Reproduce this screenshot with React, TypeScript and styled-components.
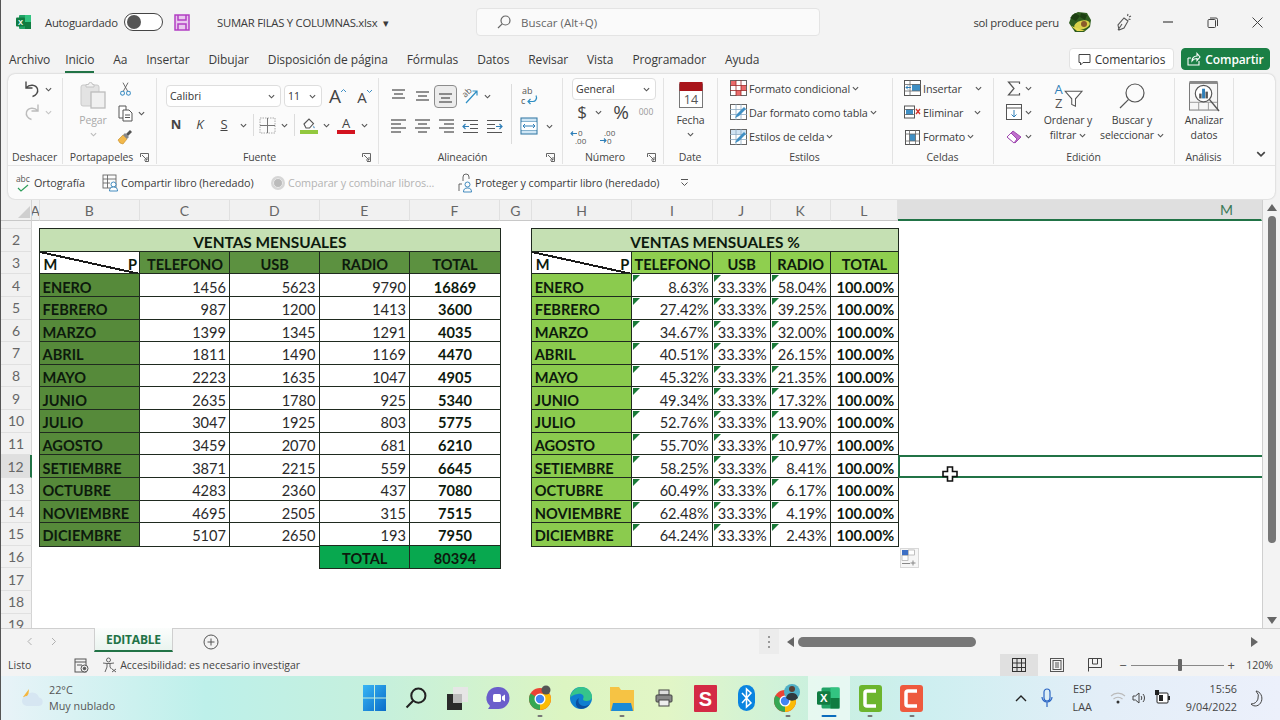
import React from "react";
import styled, { createGlobalStyle } from "styled-components";

const UI = `"Open Sans", "Noto Sans", sans-serif`;
const CELL = `Lato, "Liberation Sans", sans-serif`;

const Global = createGlobalStyle`
  html, body { margin: 0; padding: 0; width: 1280px; height: 720px; overflow: hidden; background: #f3f3f3; }
  * { box-sizing: border-box; }
  svg { overflow: visible; }
`;

const Page = styled.div`
  width: 1280px;
  height: 720px;
  display: flex;
  flex-direction: column;
  overflow: hidden;
  background: #f3f3f3;
  border-left: 1px solid #555;
  font-family: ${UI};
  color: #3a3a3a;
`;

/* title bar */
const TitleBar = styled.div`
  flex: 0 0 44px;
  display: grid;
  grid-template-columns: 44px 79px 50px 43px 259px 344px 1fr;
  align-items: center;
`;
const LogoBox = styled.div`
  padding-left: 15px;
  display: flex;
`;
const TitleText = styled.span`
  font-size: 11.3px;
  letter-spacing: -0.25px;
  white-space: nowrap;
`;
const Toggle = styled.div`
  width: 39px;
  height: 18px;
  border: 1px solid #444;
  border-radius: 9px;
  background: #fff;
  padding: 1px 2px;
`;
const Knob = styled.div`
  width: 14px;
  height: 14px;
  border-radius: 50%;
  background: #555;
`;
const SearchBox = styled.div`
  height: 28px;
  display: flex;
  align-items: center;
  gap: 10px;
  padding-left: 20px;
  background: #fafafa;
  border: 1px solid #e4e4e4;
  border-radius: 4px;
  font-size: 11.5px;
  color: #666;
`;
const TitleRight = styled.div`
  display: flex;
  align-items: center;
  justify-content: flex-end;
`;
const WinBtn = styled.div`
  width: 45px;
  display: flex;
  align-items: center;
  justify-content: center;
`;
const Spaced = styled.div<{ $l: number }>`
  display: flex;
  align-items: center;
  margin-left: ${(p) => p.$l}px;
`;

/* tab row */
const TabRow = styled.div`
  flex: 0 0 30px;
  display: flex;
  align-items: center;
  gap: 19px;
  padding: 0 10px 0 8px;
`;
const Tab = styled.div<{ $on?: boolean }>`
  position: relative;
  font-size: 12px;
  letter-spacing: -0.1px;
  white-space: nowrap;
  &:first-child {
    margin-right: -4px;
  }
  &::after {
    content: "";
    display: ${(p) => (p.$on ? "block" : "none")};
    position: absolute;
    left: 0;
    right: 0;
    bottom: -5px;
    height: 2px;
    background: #217346;
  }
`;
const ActionBtn = styled.div<{ $green?: boolean; $w: number }>`
  width: ${(p) => p.$w}px;
  height: 22px;
  display: flex;
  align-items: center;
  justify-content: center;
  gap: 4px;
  font-size: 12px;
  letter-spacing: -0.1px;
  font-weight: ${(p) => (p.$green ? 600 : 400)};
  border-radius: 4px;
  background: ${(p) => (p.$green ? "#1b7f45" : "#fff")};
  color: ${(p) => (p.$green ? "#fff" : "#333")};
  border: 1px solid ${(p) => (p.$green ? "#1b7f45" : "#e2e2e2")};
`;
const RightActions = styled.div`
  margin-left: auto;
  display: flex;
  gap: 7px;
`;

/* ribbon */
const RibbonCard = styled.div`
  flex: 0 0 125px;
  margin: 0 5px 0 7px;
  background: #fbfbfb;
  border-radius: 7px;
  box-shadow: 0 0 2px rgba(0, 0, 0, 0.25);
  display: flex;
  flex-direction: column;
`;
const RibbonRow = styled.div`
  height: 92px;
  flex: none;
  display: flex;
  border-bottom: 1px solid #e4e4e4;
`;
const Group = styled.div<{ $w: number }>`
  width: ${(p) => p.$w}px;
  flex: none;
  margin: 4px 0 1px;
  min-height: 0;
  display: flex;
  flex-direction: column;
  border-right: 1px solid #e3e3e3;
`;
const GroupBody = styled.div<{ $t?: number; $l?: number }>`
  flex: 1;
  display: flex;
  min-height: 0;
  padding: ${(p) => p.$t ?? 0}px 0 0 ${(p) => p.$l ?? 0}px;
`;
const GroupFoot = styled.div`
  flex: 0 0 14px;
  display: flex;
  align-items: center;
  padding: 1px 1px 0 0;
`;
const GroupLabel = styled.div`
  flex: 1;
  text-align: center;
  font-size: 10.5px;
  letter-spacing: -0.1px;
  color: #444;
  white-space: nowrap;
`;
const Launcher = styled.div`
  flex: 0 0 15px;
  display: flex;
`;
const Col = styled.div<{ $gap?: number; $w?: number; $center?: boolean; $mt?: number; $ml?: number }>`
  display: flex;
  flex-direction: column;
  gap: ${(p) => p.$gap ?? 0}px;
  margin: ${(p) => p.$mt ?? 0}px 0 0 ${(p) => p.$ml ?? 0}px;
  ${(p) => (p.$w ? `width: ${p.$w}px; flex: none;` : "")}
  ${(p) => (p.$center ? "align-items: center;" : "")}
`;
const Row = styled.div<{ $h?: number; $gap?: number }>`
  display: flex;
  align-items: center;
  height: ${(p) => p.$h ?? 24}px;
  gap: ${(p) => p.$gap ?? 0}px;
`;
const Slot = styled.div<{ $w: number; $sel?: boolean }>`
  width: ${(p) => p.$w}px;
  height: ${(p) => (p.$sel ? "23px" : "auto")};
  flex: none;
  display: flex;
  align-items: center;
  justify-content: center;
  ${(p) => (p.$sel ? "background:#ececec;border:1.5px solid #8c8c8c;border-radius:4px;" : "")}
`;
const VSep = styled.div<{ $h?: number }>`
  width: 1px;
  height: ${(p) => p.$h ?? 22}px;
  background: #dcdcdc;
`;
const Select = styled.div<{ $w: number; $l?: number }>`
  width: ${(p) => p.$w}px;
  height: 22px;
  margin-left: ${(p) => p.$l ?? 0}px;
  flex: none;
  display: flex;
  align-items: center;
  justify-content: space-between;
  padding: 0 5px 0 3px;
  background: #fff;
  border: 1px solid #dedede;
  border-radius: 4px;
  font-size: 10.5px;
  color: #333;
`;
const FontLetter = styled.span<{ $i?: boolean; $b?: boolean; $u?: boolean; $s?: number; $c?: string }>`
  font-family: ${UI};
  font-size: ${(p) => p.$s ?? 12}px;
  font-style: ${(p) => (p.$i ? "italic" : "normal")};
  font-weight: ${(p) => (p.$b ? 700 : 400)};
  text-decoration: ${(p) => (p.$u ? "underline" : "none")};
  color: ${(p) => p.$c ?? "#444"};
  line-height: 1.2;
`;
const SmallText = styled.div<{ $c?: string; $mt?: number }>`
  margin-top: ${(p) => p.$mt ?? 0}px;
  font-size: 10.5px;
  line-height: 15px;
  letter-spacing: -0.1px;
  color: ${(p) => p.$c ?? "#3c3c3c"};
  white-space: nowrap;
  display: flex;
  align-items: center;
  gap: 3px;
`;
const ChevLine = styled.div`
  margin-top: 3px;
  display: flex;
`;
const BigBtn = styled.div<{ $w: number }>`
  width: ${(p) => p.$w}px;
  flex: none;
  display: flex;
  flex-direction: column;
  align-items: center;
`;
const IconBox = styled.div<{ $h: number }>`
  height: ${(p) => p.$h}px;
  display: flex;
  align-items: center;
`;
const ListItem = styled.div`
  height: 24.7px;
  display: flex;
  align-items: center;
  gap: 2px;
  font-size: 10.8px;
  letter-spacing: -0.1px;
  color: #3c3c3c;
  white-space: nowrap;
`;
const CollapseBtn = styled.div`
  margin: 0 9px 6px auto;
  align-self: flex-end;
  display: flex;
`;

/* quick bar */
const QuickBar = styled.div`
  flex: 1;
  display: flex;
  align-items: center;
  padding-left: 8px;
  font-size: 10.8px;
  letter-spacing: -0.1px;
`;
const QuickItem = styled.div<{ $w: number; $off?: boolean }>`
  width: ${(p) => p.$w}px;
  flex: none;
  display: flex;
  align-items: center;
  gap: 2px;
  white-space: nowrap;
  color: ${(p) => (p.$off ? "#b4b4b4" : "#3c3c3c")};
`;

/* sheet */
const SheetArea = styled.div`
  flex: 1;
  min-height: 0;
  margin-top: 1px;
  display: flex;
`;
const Sheet = styled.div`
  width: 1261px;
  flex: none;
  height: 100%;
  overflow: hidden;
  background: #fff;
  display: grid;
  grid-template-columns: 31px 7.5px 100.5px 90px 89.5px 90.5px 90px 31.7px 100.6px 80.4px 58px 60px 67.6px 1fr;
  grid-template-rows: 21px 8px repeat(18, 22.64px);
  font-family: ${CELL};
`;
const Corner = styled.div`
  background: #f1f1f1;
  border-right: 1px solid #d4d4d4;
  border-bottom: 1px solid #c8c8c8;
  display: flex;
  align-items: flex-end;
  justify-content: flex-end;
  padding: 0 1px 2px 0;
`;
const ColHead = styled.div<{ $sel?: boolean }>`
  background: ${(p) => (p.$sel ? "#dfdfdf" : "#f1f1f1")};
  border-right: 1px solid ${(p) => (p.$sel ? "#dfdfdf" : "#e0e0e0")};
  border-bottom: ${(p) => (p.$sel ? "2px solid #217346" : "1px solid #c8c8c8")};
  color: ${(p) => (p.$sel ? "#3b7a57" : "#666")};
  font-size: 14px;
  overflow: hidden;
  display: flex;
  align-items: center;
  justify-content: ${(p) => (p.$sel ? "flex-end" : "center")};
  padding-right: ${(p) => (p.$sel ? "28px" : "0")};
`;
const RowHead = styled.div<{ $row: number; $sel?: boolean }>`
  grid-column: 1;
  grid-row: ${(p) => p.$row + 1};
  background: ${(p) => (p.$sel ? "#dfdfdf" : "#f1f1f1")};
  border-right: ${(p) => (p.$sel ? "2px solid #217346" : "1px solid #d4d4d4")};
  border-bottom: 1px solid #e0e0e0;
  color: #666;
  font-size: 14px;
  display: flex;
  align-items: center;
  justify-content: center;
  overflow: hidden;
`;
const DataTable = styled.div<{ $col: string; $row: string }>`
  grid-column: ${(p) => p.$col};
  grid-row: ${(p) => p.$row};
  display: grid;
  grid-template-columns: subgrid;
  grid-template-rows: subgrid;
  color: #111;
`;
const Cell = styled.div<{
  $bg?: string;
  $bold?: boolean;
  $align?: "left" | "right" | "center";
  $span?: number;
  $start?: number;
  $flag?: boolean;
  $size?: number;
}>`
  position: relative;
  grid-column: ${(p) => (p.$start ? `${p.$start} / span ${p.$span ?? 1}` : `span ${p.$span ?? 1}`)};
  background: ${(p) => p.$bg ?? "#fff"};
  outline: 1.2px solid #1f2a1f;
  outline-offset: -0.6px;
  font-size: ${(p) => p.$size ?? 14.6}px;
  font-weight: ${(p) => (p.$bold ? 700 : 400)};
  color: ${(p) => (p.$bold ? "#0d1a0d" : "#2a2a2a")};
  display: flex;
  align-items: center;
  justify-content: ${(p) =>
    p.$align === "left" ? "flex-start" : p.$align === "center" ? "center" : "flex-end"};
  padding: 3px 4px 0 ${(p) => (p.$align === "left" ? 3 : 4)}px;
  white-space: nowrap;
  overflow: hidden;
  ${(p) =>
    p.$flag
      ? `&::before{content:"";position:absolute;left:1px;top:1px;width:0;height:0;border-top:7px solid #1a7a38;border-right:7px solid transparent;}`
      : ""}
`;
const DiagCell = styled(Cell)`
  justify-content: space-between;
  padding: 3px 3px 0 4px;
  &::after {
    content: "";
    position: absolute;
    inset: 0;
    background: linear-gradient(
      to top right,
      transparent calc(50% - 1px),
      #1a1a1a calc(50% - 1px),
      #1a1a1a calc(50% + 1px),
      transparent calc(50% + 1px)
    );
  }
`;
const SelectedRow = styled.div`
  grid-column: 14;
  grid-row: 13;
  position: relative;
  border: solid #217346;
  border-width: 2px 0 2px 2px;
  margin-top: -0.5px;
`;
const PointerWrap = styled.div`
  position: absolute;
  left: 42px;
  top: 9px;
  display: flex;
`;
const FlashBtn = styled.div`
  grid-column: 14;
  grid-row: 17;
  width: 19px;
  height: 20px;
  margin: 2px 0 0 2px;
  background: #f6f6f6;
  border: 1px solid #d8d8d8;
  display: flex;
  align-items: center;
  justify-content: center;
`;
const VScroll = styled.div`
  flex: 1;
  background: #f3f3f3;
  border-left: 1px solid #cfcfcf;
  display: flex;
  flex-direction: column;
  align-items: center;
  padding: 3px 0 0;
`;
const VThumb = styled.div`
  width: 8px;
  height: 327px;
  margin: 3px 0 0;
  border-radius: 4px;
  background: #767676;
`;
const VDown = styled.div`
  margin-top: auto;
  padding-bottom: 2px;
  display: flex;
`;

/* sheet tabs */
const SheetTabs = styled.div`
  flex: 0 0 26px;
  display: flex;
  align-items: stretch;
  border-top: 1px solid #cfcfcf;
`;
const TabNav = styled.div`
  width: 93px;
  display: flex;
  align-items: center;
  gap: 18px;
  padding-left: 26px;
`;
const SheetTab = styled.div`
  width: 79px;
  height: 24px;
  margin-top: -1px;
  display: flex;
  align-items: center;
  justify-content: center;
  background: linear-gradient(#fbfdfc, #eaf4ef);
  border: 1px solid #cfcfcf;
  border-top: none;
  border-bottom: 2px solid #217346;
  color: #217346;
  font-size: 12px;
  font-weight: 700;
  letter-spacing: -0.2px;
`;
const AddBox = styled.div`
  margin-left: 30px;
  display: flex;
  align-items: center;
`;
const Dots = styled.div`
  margin-left: auto;
  width: 20px;
  background: #ececec;
  display: flex;
  align-items: center;
  justify-content: center;
`;
const HScroll = styled.div`
  width: 501px;
  display: flex;
  align-items: center;
  padding: 0 20px 0 6px;
  gap: 3px;
`;
const HThumb = styled.div`
  width: 179px;
  height: 10px;
  border-radius: 5px;
  background: #777;
`;

/* status bar */
const StatusBar = styled.div`
  flex: 0 0 22px;
  display: flex;
  align-items: center;
  font-size: 10.5px;
  color: #444;
  padding-left: 7px;
`;
const StatusIcon = styled.div<{ $l: number }>`
  margin-left: ${(p) => p.$l}px;
  display: flex;
  align-items: center;
  gap: 3px;
`;
const ViewBtn = styled.div<{ $on?: boolean }>`
  width: 38px;
  height: 22px;
  display: flex;
  align-items: center;
  justify-content: center;
  background: ${(p) => (p.$on ? "#e0e0e0" : "transparent")};
`;
const ViewGroup = styled.div`
  margin-left: auto;
  display: flex;
  align-items: center;
`;
const ZoomTrack = styled.div`
  position: relative;
  width: 93px;
  height: 1px;
  background: #888;
  margin: 0 4px;
`;
const ZoomThumb = styled.div`
  position: absolute;
  left: 47px;
  top: -6px;
  width: 4px;
  height: 12px;
  border-radius: 1px;
  background: #666;
`;
const ZoomPct = styled.div`
  width: 45px;
  padding-left: 4px;
  text-align: center;
`;
const ZoomSign = styled.span<{ $l?: number }>`
  margin-left: ${(p) => p.$l ?? 0}px;
  font-size: 13px;
  color: #555;
`;

/* taskbar */
const Taskbar = styled.div`
  flex: 0 0 44px;
  display: flex;
  align-items: center;
  background: linear-gradient(
    90deg,
    #e8f3f8 0%,
    #bdf0ea 16%,
    #c6f0dc 30%,
    #dcf5c2 44%,
    #e2f6c6 52%,
    #c9f0df 64%,
    #cdeff0 72%,
    #e3eef8 86%,
    #ecf0fb 100%
  );
`;
const Weather = styled.div`
  width: 353px;
  flex: none;
  display: flex;
  align-items: center;
  gap: 5px;
  padding-left: 19px;
`;
const WeatherText = styled.div`
  font-size: 10.8px;
  line-height: 16px;
  color: #555;
`;
const TaskIcons = styled.div`
  display: flex;
  align-items: center;
`;
const TaskSlot = styled.div<{ $on?: boolean; $run?: boolean }>`
  position: relative;
  width: 41.3px;
  height: 44px;
  display: flex;
  align-items: center;
  justify-content: center;
  background: ${(p) => (p.$on ? "rgba(255,255,255,.55)" : "transparent")};
  &::after {
    content: "";
    display: ${(p) => (p.$on || p.$run ? "block" : "none")};
    position: absolute;
    bottom: 3px;
    left: 50%;
    transform: translateX(-50%);
    width: ${(p) => (p.$on ? "15px" : "5px")};
    height: 2px;
    border-radius: 1px;
    background: ${(p) => (p.$on ? "#0a6cbd" : "#777")};
  }
`;
const Tray = styled.div`
  margin-left: auto;
  display: flex;
  align-items: center;
  padding-right: 16px;
`;
const TrayItem = styled.div<{ $l: number }>`
  margin-left: ${(p) => p.$l}px;
  display: flex;
  align-items: center;
`;
const TrayText = styled.div<{ $right?: boolean }>`
  font-size: 10.8px;
  line-height: 18px;
  color: #444;
  text-align: ${(p) => (p.$right ? "right" : "center")};
`;

/* icons */
const Chev = ({ c = "#555", s = 7 }: { c?: string; s?: number }) => (
  <svg width={s} height={s} viewBox="0 0 8 8" fill="none" stroke={c} strokeWidth="1.3">
    <path d="M1 2.5l3 3 3-3" />
  </svg>
);
const Launch = () => (
  <svg width="9" height="9" viewBox="0 0 9 9" fill="none" stroke="#666" strokeWidth="1">
    <path d="M.5 4V.5h8v8H5M2 2l5 5M4 7h3V4" />
  </svg>
);
const Bars = ({ rows, c = "#555" }: { rows: number[][]; c?: string }) => (
  <svg width="17" height="16" viewBox="0 0 17 16" stroke={c} strokeWidth="1.3" fill="none">
    {rows.map((r, i) => (
      <path key={i} d={`M${r[0]} ${r[2]}H${r[1]}`} />
    ))}
  </svg>
);
const ExcelLogo = ({ s = 16 }: { s?: number }) => (
  <svg width={s} height={s} viewBox="0 0 16 16">
    <rect x="3" y="1" width="12" height="14" rx="1" fill="#21a366" />
    <rect x="9" y="1" width="6" height="7" fill="#33c481" />
    <rect x="9" y="8" width="6" height="7" fill="#107c41" />
    <rect x="0" y="3.5" width="9" height="9" rx="1" fill="#107c41" />
    <text x="4.5" y="10.8" fontSize="7.5" fontWeight="700" fill="#fff" textAnchor="middle" fontFamily="Liberation Sans">X</text>
  </svg>
);
const Save = () => (
  <svg width="16" height="17" viewBox="0 0 16 17" fill="#e9c9ee" stroke="#b23fc4" strokeWidth="1.5">
    <rect x="1" y="1" width="14" height="15" />
    <path d="M4 1v5h8V1M4 16v-6h8v6" fill="none" />
  </svg>
);
const Magnifier = ({ s = 14, c = "#666", w = 1.2 }: { s?: number; c?: string; w?: number }) => (
  <svg width={s} height={s} viewBox="0 0 14 14" fill="none" stroke={c} strokeWidth={w}>
    <circle cx="8.5" cy="5.5" r="4.5" />
    <path d="M5.2 8.8L1 13" />
  </svg>
);
const Avatar = () => (
  <svg width="24" height="22" viewBox="0 0 24 22">
    <path d="M1 12L4 4l6-3 9 1 4 7-1 7-6 5-9 0z" fill="#2f5d1f" />
    <path d="M2 7l5-5 5 3-4 5zM13 2l6 2-2 5-5-3z" fill="#1d3f12" />
    <ellipse cx="14" cy="14" rx="8" ry="4.5" fill="#d8d24a" transform="rotate(-15 14 14)" />
    <circle cx="16" cy="13" r="3" fill="#8a5a2b" />
    <path d="M3 15l6 5 8 0-8-3z" fill="#e6da4e" />
  </svg>
);
const Pen = () => (
  <svg width="16" height="18" viewBox="0 0 16 18" fill="none" stroke="#555" strokeWidth="1.1">
    <path d="M3 17l-1-5 6-7 4 3-4 7z M6 11l-4 6M12 1l-.5 2M15 3l-2 1M14.5 6.5l-2-.4" />
  </svg>
);
const Comment = ({ c = "#444" }: { c?: string }) => (
  <svg width="13" height="13" viewBox="0 0 13 13" fill="none" stroke={c} strokeWidth="1">
    <path d="M1 1.5h11v8H5l-2.5 2.5v-2.5H1z" />
  </svg>
);
const ShareIc = () => (
  <svg width="14" height="14" viewBox="0 0 14 14" fill="none" stroke="#fff" strokeWidth="1.1">
    <path d="M1 6v7h11V9M1 6h3M5 9c0-3 2-5 5-5V1.500L13 5l-3 3.500V6.500c-2 0-4 1-5 2.500z" />
  </svg>
);
const Undo = ({ c = "#4a4a4a", flip }: { c?: string; flip?: boolean }) => (
  <svg width="16" height="18" viewBox="0 0 16 18" fill="none" stroke={c} strokeWidth="1.4" style={flip ? { transform: "scaleX(-1)" } : undefined}>
    <path d="M2 1.5v6.500h6.500M2 8c3.500-4 10-3.500 11.500 1 1 3.500-1.500 6.500-5 7.500" />
  </svg>
);
const Clipboard = () => (
  <svg width="26" height="27" viewBox="0 0 26 27">
    <rect x="1" y="3" width="18" height="21" rx="2" fill="#e3e3e3" stroke="#c9c9c9" />
    <path d="M6 5V2.500h2.500a2 2 0 0 1 4 0H14V5z" fill="#f2f2f2" stroke="#c4c4c4" />
    <rect x="11" y="10" width="14" height="16" fill="#f0f0f0" stroke="#bcbcbc" strokeWidth="1.3" />
  </svg>
);
const Cut = () => (
  <svg width="11" height="16" viewBox="0 0 13 17" fill="none">
    <path d="M4 11L9.500 1M9 11L3.500 1" stroke="#555" strokeWidth="1" />
    <circle cx="3" cy="13.500" r="2.300" stroke="#3f8fc4" strokeWidth="1.2" />
    <circle cx="10" cy="13.500" r="2.300" stroke="#3f8fc4" strokeWidth="1.2" />
  </svg>
);
const Copy = () => (
  <svg width="15" height="17" viewBox="0 0 15 17" fill="#fff" stroke="#555" strokeWidth="1">
    <path d="M1 1h7v12H1z" />
    <path d="M5 5h6l3 3v8H5z" />
    <path d="M7 10h5M7 12.500h5" />
  </svg>
);
const Brush = () => (
  <svg width="16" height="16" viewBox="0 0 16 16">
    <path d="M1 11l5-5 4 4-4 5-3-1z" fill="#f2b84b" stroke="#c48a22" strokeWidth=".6" />
    <path d="M6 6l2-2 4 4-2 2z" fill="#888" />
    <path d="M9 5l4-4 2 2-4 4z" fill="#555" />
  </svg>
);
const BorderIc = () => (
  <svg width="17" height="17" viewBox="0 0 17 17" fill="none" stroke="#aaa" strokeWidth="1">
    <rect x="1" y="1" width="15" height="15" strokeDasharray="1.500 1" />
    <path d="M8.500 1v15M1 8.500h15" stroke="#777" />
  </svg>
);
const FillIc = () => (
  <svg width="18" height="18" viewBox="0 0 18 18">
    <path d="M4 8l5-5 4.500 4.500-4 4.500H6z" fill="none" stroke="#555" strokeWidth="1.1" />
    <path d="M13.500 9.500c1 1.500 1.500 2 1 2.500s-1.500 0-1-2.500z" fill="#2f7fb8" />
    <rect x="0" y="14" width="18" height="4" fill="#92c83e" />
  </svg>
);
const ColorA = () => (
  <svg width="18" height="18" viewBox="0 0 18 18">
    <text x="9" y="12" fontSize="13" fill="#444" textAnchor="middle" fontFamily="Open Sans">A</text>
    <rect x="0" y="14" width="18" height="4" fill="#d3131f" />
  </svg>
);
const GrowA = ({ down }: { down?: boolean }) => (
  <svg width="19" height="18" viewBox="0 0 19 18">
    <text x="7" y="16" fontSize={down ? 15 : 19} fill="#444" textAnchor="middle" fontFamily="Open Sans">A</text>
    <path d={down ? "M12 3l2.500 2.500L17 3" : "M13 5l2.500-2.500L18 5"} stroke="#3f8fc4" fill="none" strokeWidth="1" />
  </svg>
);
const Orient = () => (
  <svg width="18" height="17" viewBox="0 0 18 17">
    <text x="3" y="9" fontSize="8.500" fill="#555" fontFamily="Open Sans" transform="rotate(-45 5 8)">ab</text>
    <path d="M5 15L16 3M11.500 3H16v4.500" stroke="#2f8fc4" fill="none" strokeWidth="1.200" />
  </svg>
);
const IndentL = ({ flip }: { flip?: boolean }) => (
  <svg width="17" height="15" viewBox="0 0 17 15" fill="none" strokeWidth="1.200" style={flip ? { transform: "scaleX(-1)" } : undefined}>
    <path d="M1 1.500h15M8 5.500h8M8 9.500h8M1 13.500h15" stroke="#555" />
    <path d="M7 7.500H1M3.500 5L1 7.500 3.500 10" stroke="#2f7fb8" />
  </svg>
);
const Wrap = () => (
  <svg width="17" height="20" viewBox="0 0 17 20">
    <text x="1" y="8" fontSize="9" fill="#555" fontFamily="Open Sans">ab</text>
    <text x="0" y="18" fontSize="9" fill="#555" fontFamily="Open Sans">c</text>
    <path d="M15 9.500c1.500 3-.5 6-3 6H7M9.500 13L7 15.500 9.500 18" stroke="#2f8fc4" fill="none" strokeWidth="1.200" />
  </svg>
);
const Merge = () => (
  <svg width="18" height="18" viewBox="0 0 18 18" fill="none">
    <rect x="1" y="1" width="16" height="16" fill="#cfe6f5" stroke="#3d7ea8" strokeWidth="1.100" />
    <path d="M1 5h16M1 13h16" stroke="#3d7ea8" />
    <rect x="1.500" y="5" width="15" height="8" fill="#fff" />
    <path d="M3 9h12M5 7L3 9l2 2M13 7l2 2-2 2" stroke="#2f7fb8" />
  </svg>
);
const Decimal = ({ more }: { more?: boolean }) => (
  <svg width="18" height="18" viewBox="0 0 18 18">
    <text x={more ? 5 : 8} y="8" fontSize="8" fill="#555" fontFamily="Open Sans">{more ? ".00" : "0"}</text>
    <text x={more ? 8 : 5} y="16" fontSize="8" fill="#555" fontFamily="Open Sans">{more ? "0" : ".00"}</text>
    <path d={more ? "M1 12.500h6M5 10.500l2 2-2 2" : "M1 5.500h6M3 3.500l-2 2 2 2"} stroke="#2f7fb8" fill="none" strokeWidth="1.100" />
  </svg>
);
const Calendar = () => (
  <svg width="24" height="27" viewBox="0 0 24 27">
    <rect x=".5" y="3" width="23" height="23.500" fill="#fff" stroke="#777" />
    <rect x=".5" y="1" width="23" height="9" fill="#a8141a" />
    <text x="12" y="23" fontSize="12.500" fill="#555" textAnchor="middle" fontFamily="Open Sans">14</text>
  </svg>
);
const CondFmt = () => (
  <svg width="17" height="16" viewBox="0 0 17 16">
    <rect x=".5" y=".5" width="16" height="15" fill="#fff" stroke="#666" />
    <rect x="1" y="1" width="5" height="4.500" fill="#ea6a6a" />
    <rect x="11" y="5.500" width="5" height="5" fill="#ea6a6a" />
    <rect x="6" y="10.500" width="5" height="5" fill="#ea6a6a" />
    <path d="M6 0v16M11 0v16M0 5.500h17M0 10.500h17" stroke="#9a2a2a" strokeWidth=".8" />
  </svg>
);
const TableFmt = ({ cell }: { cell?: boolean }) => (
  <svg width="17" height="16" viewBox="0 0 17 16">
    <rect x=".5" y=".5" width="16" height="15" fill="#fff" stroke="#666" />
    {cell ? <rect x="1" y="1" width="15" height="4" fill="#cfe3f3" /> : null}
    <path d="M6 0v16M11 0v16M0 5.500h17M0 10.500h17" stroke="#8aa8c0" strokeWidth=".8" />
    <path d="M5 14l2-4 7-7 2 2-7 7z" fill="#3f8fc4" />
  </svg>
);
const CellIns = () => (
  <svg width="17" height="16" viewBox="0 0 17 16">
    <rect x=".5" y=".5" width="16" height="15" fill="#fff" stroke="#555" />
    <rect x="8" y="4" width="8" height="7" fill="#3f8fc4" />
    <path d="M0 4.500h17M0 11h17M6 0v16" stroke="#666" strokeWidth=".8" />
    <path d="M7 7.500H2M4 5.500l-2 2 2 2" stroke="#2f7fb8" fill="none" />
  </svg>
);
const CellDel = () => (
  <svg width="17" height="16" viewBox="0 0 17 16">
    <rect x=".5" y="2" width="10" height="12" fill="#fff" stroke="#555" />
    <rect x="2" y="5" width="7" height="6" fill="#3f8fc4" />
    <path d="M12 5l4 5M16 5l-4 5" stroke="#d3312a" strokeWidth="1.300" />
    <path d="M0 5.500h11M0 10.500h11" stroke="#666" strokeWidth=".8" />
  </svg>
);
const CellFmt = () => (
  <svg width="17" height="18" viewBox="0 0 17 18">
    <rect x="1.500" y="2.500" width="14" height="14" fill="#fff" stroke="#555" />
    <rect x="5.500" y="6" width="6" height="7" fill="#3f8fc4" />
    <path d="M1 6h15M1 13h15M5.500 2v15M11.500 2v15" stroke="#666" strokeWidth=".8" />
  </svg>
);
const Sigma = () => (
  <svg width="14" height="15" viewBox="0 0 14 15" fill="none" stroke="#555" strokeWidth="1.200">
    <path d="M12.500 3V1H1.500L7 7.500 1.500 14h11v-2" />
  </svg>
);
const FillDown = () => (
  <svg width="16" height="16" viewBox="0 0 16 16" fill="#fff" stroke="#555">
    <rect x=".5" y=".5" width="15" height="15" />
    <path d="M0 4h16" />
    <path d="M8 6v7M5.500 10.500L8 13l2.500-2.500" stroke="#2f7fb8" fill="none" />
  </svg>
);
const Eraser = () => (
  <svg width="16" height="14" viewBox="0 0 16 14">
    <path d="M1 7l6-6 8 6-6 6z" fill="#c070cc" stroke="#a04ab0" />
    <path d="M1 7l4-4 6 6-3 4z" fill="#fff" stroke="#a04ab0" />
  </svg>
);
const SortFilter = () => (
  <svg width="30" height="28" viewBox="0 0 32 30" fill="none">
    <text x="6" y="13" fontSize="14" fill="#2f7fb8" textAnchor="middle" fontFamily="Open Sans">A</text>
    <text x="6" y="28" fontSize="14" fill="#555" textAnchor="middle" fontFamily="Open Sans">Z</text>
    <path d="M13 10h18l-7 8v8l-4-2v-6z" stroke="#555" strokeWidth="1.100" fill="#fff" />
  </svg>
);
const ChartLens = () => (
  <svg width="31" height="32" viewBox="0 0 32 33" fill="none" stroke="#555">
    <rect x=".5" y="3" width="29" height="28" fill="#f6f6f6" stroke="#777" />
    <rect x=".5" y="1" width="29" height="3" fill="#888" stroke="none" />
    <path d="M1 23h28M10 23v8M20 23v8" stroke="#999" />
    <circle cx="15" cy="14" r="8.500" fill="#fff" strokeWidth="1.200" />
    <rect x="10.500" y="14" width="2.500" height="5" fill="#555" stroke="none" />
    <rect x="13.500" y="9" width="3" height="10" fill="#2f7fb8" stroke="none" />
    <rect x="17" y="12" width="2.500" height="7" fill="#555" stroke="none" />
    <path d="M21 20l10 12" strokeWidth="1.500" />
  </svg>
);
const Spell = () => (
  <svg width="16" height="20" viewBox="0 0 16 20">
    <text x="0" y="9" fontSize="8.500" fill="#555" fontFamily="Open Sans">abc</text>
    <path d="M2 15l3 3 7-6" stroke="#2e9e5b" fill="none" strokeWidth="1.200" />
  </svg>
);
const ShareBook = () => (
  <svg width="17" height="18" viewBox="0 0 17 18" fill="none" stroke="#666" strokeWidth=".9">
    <rect x="1" y="1" width="13" height="13" />
    <path d="M1 5h13M1 9h7M5.500 1v13" />
    <circle cx="11.500" cy="10.500" r="2.500" fill="#fff" stroke="#2f7fb8" />
    <path d="M7.500 17c0-3 1.500-4 4-4s4 1 4 4z" fill="#fff" stroke="#2f7fb8" />
  </svg>
);
const MergeBook = () => (
  <svg width="16" height="16" viewBox="0 0 16 16">
    <circle cx="8" cy="8" r="7" fill="#d6d6d6" />
    <circle cx="8" cy="8" r="4.500" fill="#bbb" stroke="#e8e8e8" />
  </svg>
);
const ProtectBook = () => (
  <svg width="15" height="20" viewBox="0 0 15 20" fill="none" stroke="#555" strokeWidth=".9">
    <path d="M5 8V4a3 3 0 0 1 6 0v2M1 18v-7h3" />
    <circle cx="9.500" cy="11.500" r="2.500" stroke="#2f7fb8" />
    <path d="M5.500 19c0-3 1.500-4 4-4s4 1 4 4z" stroke="#2f7fb8" />
  </svg>
);
const QuickMore = () => (
  <svg width="9" height="9" viewBox="0 0 9 9" fill="none" stroke="#555">
    <path d="M1 1.500h7M1.500 4.500l3 3 3-3" />
  </svg>
);
const PointerCross = () => (
  <svg width="16" height="16" viewBox="0 0 16 16">
    <path d="M5.500 1h5v4.500H15v5h-4.500V15h-5v-4.500H1v-5h4.500z" fill="#fff" stroke="#111" strokeWidth="1.600" />
  </svg>
);
const FlashIc = () => (
  <svg width="15" height="16" viewBox="0 0 15 16">
    <rect x="0" y="0" width="6" height="5" fill="#3d6fc4" />
    <rect x="6.500" y="0" width="6" height="5" fill="#fff" stroke="#999" strokeWidth=".6" />
    <rect x="0" y="5.500" width="6" height="5" fill="#fff" stroke="#999" strokeWidth=".6" />
    <path d="M0 13.500h8M11 10.500v5M8.500 13h5" stroke="#888" />
  </svg>
);
const Tri = ({ dir }: { dir: "up" | "down" | "left" | "right" }) => {
  const d = { up: "M0 8l5-7 5 7z", down: "M0 1l5 7 5-7z", left: "M9 0L2 5l7 5z", right: "M1 0l7 5-7 5z" }[dir];
  return (
    <svg width="10" height="10" viewBox="0 0 10 10" fill="#666">
      <path d={d} />
    </svg>
  );
};
const NavArrow = ({ left }: { left?: boolean }) => (
  <svg width="6" height="9" viewBox="0 0 6 9" fill="none" stroke="#b0b0b0">
    <path d={left ? "M4.500 1L1 4.500 4.500 8" : "M1 1l3.500 3.500L1 8"} />
  </svg>
);
const PlusCircle = () => (
  <svg width="16" height="16" viewBox="0 0 16 16" fill="none" stroke="#555">
    <circle cx="8" cy="8" r="7" />
    <path d="M8 4.500v7M4.500 8h7" />
  </svg>
);
const MacroIc = () => (
  <svg width="15" height="15" viewBox="0 0 15 15" fill="none" stroke="#555">
    <rect x="1" y="1" width="11" height="13" />
    <path d="M1 4h11M3 7h5" />
    <circle cx="10.500" cy="10.500" r="3.500" fill="#f3f3f3" />
    <circle cx="10.500" cy="10.500" r="1.300" fill="#555" />
  </svg>
);
const AccessIc = () => (
  <svg width="15" height="16" viewBox="0 0 15 16" fill="none" stroke="#555" strokeWidth=".9">
    <circle cx="6.500" cy="3" r="2" />
    <path d="M1 6l4 .5h3l4-.5M5 7v3l-2 5M8 7v3l1.500 2M10 12l4 3M14 12l-4 3" />
  </svg>
);
const GridView = () => (
  <svg width="14" height="14" viewBox="0 0 14 14" fill="none" stroke="#333">
    <rect x=".5" y=".5" width="13" height="13" />
    <path d="M5 0v14M9.500 0v14M0 5h14M0 9.500h14" />
  </svg>
);
const PageView = () => (
  <svg width="14" height="14" viewBox="0 0 14 14" fill="none" stroke="#555">
    <rect x=".5" y=".5" width="13" height="13" />
    <rect x="3" y="2.500" width="8" height="9" />
    <path d="M5 5h4M5 7h4M5 9h4" />
  </svg>
);
const BreakView = () => (
  <svg width="14" height="14" viewBox="0 0 14 14" fill="none" stroke="#444">
    <path d="M.5 13.500V.5h13v9h-13M4.500 1v5h5V1" />
  </svg>
);
const Weath = () => (
  <svg width="24" height="22" viewBox="0 0 24 22">
    <path d="M9 2L3 10l5 2z" fill="#f4b63f" />
    <path d="M7 19a5 5 0 0 1 0-10 6.500 6.500 0 0 1 12 1.500 4.300 4.300 0 0 1 0 8.500z" fill="#d6e6f2" />
  </svg>
);
const Win = () => (
  <svg width="23" height="26" viewBox="0 0 23 26">
    <defs>
      <linearGradient id="w" x1="0" y1="0" x2="1" y2="1">
        <stop offset="0" stopColor="#38b6f5" />
        <stop offset="1" stopColor="#0a6cc9" />
      </linearGradient>
    </defs>
    <path d="M0 0h11v12.500H0zM12 0h11v12.500H12zM0 13.500h11V26H0zM12 13.500h11V26H12z" fill="url(#w)" />
  </svg>
);
const Chrome = () => (
  <svg width="24" height="26" viewBox="0 0 24 26">
    <circle cx="12" cy="14" r="11" fill="#ea4335" />
    <path d="M12 25A11 11 0 0 1 2.500 8.500L12 14z" fill="#34a853" />
    <path d="M12 25a11 11 0 0 0 9.500-16.500H12z" fill="#fbbc05" />
    <circle cx="12" cy="14" r="5.500" fill="#fff" />
    <circle cx="12" cy="14" r="4.200" fill="#4285f4" />
    <circle cx="18" cy="5" r="4.500" fill="#555" />
  </svg>
);
const Profile = () => (
  <svg width="26" height="30" viewBox="0 0 26 30" style={{ marginLeft: -2 }}>
    <circle cx="11" cy="18" r="11" fill="#ea4335" />
    <path d="M11 29A11 11 0 0 1 1.500 12.500L11 18z" fill="#34a853" />
    <path d="M11 29a11 11 0 0 0 9.500-16.500H11z" fill="#fbbc05" />
    <circle cx="11" cy="18" r="5.500" fill="#fff" />
    <circle cx="11" cy="18" r="4.200" fill="#4285f4" />
    <circle cx="18" cy="9" r="8" fill="#4fb0c6" />
    <circle cx="18" cy="6" r="3" fill="#5a4034" />
    <path d="M12 15c1-4 3-5 6-5s5 1 6 5a8 8 0 0 1-12 0z" fill="#2f3a3f" />
  </svg>
);
const Edge = () => (
  <svg width="24" height="24" viewBox="0 0 24 24">
    <circle cx="12" cy="12" r="11" fill="#0f7fd0" />
    <path d="M1 12C2 5 7 1 12 1c6 0 11 4 11 10 0 3-3 4-6 4-2 0-3-1-3-2 2-3-1-6-5-5-4 .5-7 2-8 4z" fill="#35c48b" />
    <path d="M9 22c-3-3-3-8 1-10-2 4 1 8 5 8 2 0 4-.5 6-2-3 4-8 6-12 4z" fill="#0a4fa0" />
  </svg>
);
const Folder = () => (
  <svg width="24" height="26" viewBox="0 0 24 26">
    <path d="M0 2h9l2 3h13v21H0z" fill="#f6c344" />
    <path d="M3 18h18l2 8H1z" fill="#1d8ad6" />
  </svg>
);
const Printer = () => (
  <svg width="18" height="18" viewBox="0 0 18 18" fill="none" stroke="#444">
    <rect x="4" y="1" width="10" height="5" fill="#ddd" />
    <rect x="1" y="6" width="16" height="7" rx="1" fill="#888" />
    <rect x="4" y="11" width="10" height="6" fill="#eee" />
  </svg>
);
const SApp = () => (
  <svg width="23" height="27" viewBox="0 0 23 27">
    <rect width="23" height="27" rx="1" fill="#d42a45" />
    <text x="11.500" y="21" fontSize="20" fontWeight="700" fill="#fff" textAnchor="middle" fontFamily="Liberation Sans">S</text>
  </svg>
);
const Bt = () => (
  <svg width="17" height="26" viewBox="0 0 17 26">
    <rect width="17" height="26" rx="8.500" fill="#0a84e0" />
    <path d="M4 8l9 10-4.500 4V4L13 8 4 18" stroke="#fff" fill="none" strokeWidth="1.500" />
  </svg>
);
const CApp = ({ c }: { c: string }) => (
  <svg width="23" height="27" viewBox="0 0 23 27">
    <rect width="23" height="27" rx="3" fill={c} />
    <path d="M17 6H8a2 2 0 0 0-2 2v11a2 2 0 0 0 2 2h9" stroke="#fff" fill="none" strokeWidth="3.500" />
  </svg>
);
const Meet = () => (
  <svg width="23" height="24" viewBox="0 0 23 24">
    <path d="M11.500 1a11 11 0 0 1 0 22H1l2-3a11 11 0 0 1 8.500-19z" fill="#6a5ecb" />
    <rect x="6" y="8" width="8" height="8" rx="1.500" fill="#fff" />
    <path d="M15 10.500l3-2v7l-3-2z" fill="#fff" />
  </svg>
);
const TaskView = () => (
  <svg width="22" height="24" viewBox="0 0 22 24">
    <rect x="7" y="1" width="15" height="15" fill="#e6e6e6" />
    <rect x="1" y="8" width="15" height="16" fill="#2a2a2a" />
    <rect x="7" y="8" width="9" height="9" fill="#bbb" />
  </svg>
);
const CaretUp = () => (
  <svg width="12" height="8" viewBox="0 0 12 8" fill="none" stroke="#222" strokeWidth="1.400">
    <path d="M1 7l5-5 5 5" />
  </svg>
);
const Mic = () => (
  <svg width="12" height="20" viewBox="0 0 12 20" fill="none" stroke="#2b66c4" strokeWidth="1.200">
    <rect x="3" y="1" width="6" height="12" rx="3" />
    <path d="M1 9a5 5 0 0 0 10 0M6 14v5" />
  </svg>
);
const Wifi = () => (
  <svg width="16" height="14" viewBox="0 0 16 14" fill="none" stroke="#bbb" strokeWidth="1.100">
    <path d="M1 5a10 10 0 0 1 14 0M3.500 8a6.500 6.500 0 0 1 9 0" />
    <circle cx="8" cy="11" r="1.500" fill="#333" stroke="none" />
  </svg>
);
const Vol = () => (
  <svg width="14" height="14" viewBox="0 0 14 14" fill="none" stroke="#444">
    <path d="M1 5v4h2.500L7 12V2L3.500 5zM9 5c1 1 1 3 0 4M11 3c2 2 2 6 0 8" />
  </svg>
);
const Batt = () => (
  <svg width="16" height="16" viewBox="0 0 16 16">
    <rect x="3" y="3" width="11" height="10" rx="1" fill="#fff" stroke="#222" />
    <rect x="5" y="5" width="4" height="6" fill="#222" />
    <rect x="1" y="0" width="4" height="5" fill="#222" />
    <rect x="14" y="6" width="2" height="4" fill="#222" />
  </svg>
);
const Moon = () => (
  <svg width="14" height="17" viewBox="0 0 14 17" fill="none" stroke="#444">
    <path d="M6 1a6.500 7.500 0 1 1-5 13A7.500 7.500 0 0 0 6 1z" />
  </svg>
);

/* data */
const months = ["ENERO", "FEBRERO", "MARZO", "ABRIL", "MAYO", "JUNIO", "JULIO", "AGOSTO", "SETIEMBRE", "OCTUBRE", "NOVIEMBRE", "DICIEMBRE"];
const sales = [
  [1456, 5623, 9790, 16869],
  [987, 1200, 1413, 3600],
  [1399, 1345, 1291, 4035],
  [1811, 1490, 1169, 4470],
  [2223, 1635, 1047, 4905],
  [2635, 1780, 925, 5340],
  [3047, 1925, 803, 5775],
  [3459, 2070, 681, 6210],
  [3871, 2215, 559, 6645],
  [4283, 2360, 437, 7080],
  [4695, 2505, 315, 7515],
  [5107, 2650, 193, 7950],
];
const pctPhone = ["8.63", "27.42", "34.67", "40.51", "45.32", "49.34", "52.76", "55.70", "58.25", "60.49", "62.48", "64.24"];
const pctRadio = ["58.04", "39.25", "32.00", "26.15", "21.35", "17.32", "13.90", "10.97", "8.41", "6.17", "4.19", "2.43"];
const heads = ["TELEFONO", "USB", "RADIO", "TOTAL"];
const columns = ["A", "B", "C", "D", "E", "F", "G", "H", "I", "J", "K", "L"];
const tabs = ["Archivo", "Inicio", "Aa", "Insertar", "Dibujar", "Disposición de página", "Fórmulas", "Datos", "Revisar", "Vista", "Programador", "Ayuda"];
const rowsShown = [1, 2, 3, 4, 5, 6, 7, 8, 9, 10, 11, 12, 13, 14, 15, 16, 17, 18, 19];

const Label = ({ children, launcher }: { children: string; launcher?: boolean }) => (
  <GroupFoot>
    <GroupLabel>{children}</GroupLabel>
    {launcher ? (
      <Launcher>
        <Launch />
      </Launcher>
    ) : null}
  </GroupFoot>
);

const Ribbon = () => (
  <RibbonCard>
    <RibbonRow>
      <Group $w={55}>
        <GroupBody $l={16}>
          <Col $gap={1}>
            <Row $h={22} $gap={5}>
              <Undo />
              <Chev />
            </Row>
            <Row $h={22} $gap={5}>
              <Undo c="#bcbcbc" flip />
              <Chev c="#c4c4c4" />
            </Row>
          </Col>
        </GroupBody>
        <Label>Deshacer</Label>
      </Group>
      <Group $w={94}>
        <GroupBody $l={11}>
          <Col $w={38} $center $mt={4}>
            <Clipboard />
            <SmallText $c="#aaa" $mt={4}>Pegar</SmallText>
            <ChevLine>
              <Chev c="#bbb" />
            </ChevLine>
          </Col>
          <Col $gap={2} $ml={5}>
            <Row $h={22}>
              <Slot $w={16}>
                <Cut />
              </Slot>
            </Row>
            <Row $h={22} $gap={5}>
              <Slot $w={16}>
                <Copy />
              </Slot>
              <Chev />
            </Row>
            <Row $h={22}>
              <Slot $w={16}>
                <Brush />
              </Slot>
            </Row>
          </Col>
        </GroupBody>
        <Label launcher>Portapapeles</Label>
      </Group>
      <Group $w={222}>
        <GroupBody $t={7} $l={7}>
          <Col $gap={6}>
            <Row $h={22} $gap={3}>
              <Select $w={115} $l={2}>
                Calibri
                <Chev />
              </Select>
              <Select $w={38}>
                11
                <Chev />
              </Select>
              <Slot $w={25}>
                <GrowA />
              </Slot>
              <Slot $w={22}>
                <GrowA down />
              </Slot>
            </Row>
            <Row>
              <Slot $w={24}>
                <FontLetter $b $s={13}>N</FontLetter>
              </Slot>
              <Slot $w={24}>
                <FontLetter $i $s={13}>K</FontLetter>
              </Slot>
              <Slot $w={24}>
                <FontLetter $u $s={13}>S</FontLetter>
              </Slot>
              <Slot $w={14}>
                <Chev />
              </Slot>
              <Slot $w={6}>
                <VSep />
              </Slot>
              <Slot $w={22}>
                <BorderIc />
              </Slot>
              <Slot $w={12}>
                <Chev />
              </Slot>
              <Slot $w={8}>
                <VSep />
              </Slot>
              <Slot $w={22}>
                <FillIc />
              </Slot>
              <Slot $w={13}>
                <Chev />
              </Slot>
              <Slot $w={26}>
                <ColorA />
              </Slot>
              <Slot $w={10}>
                <Chev />
              </Slot>
            </Row>
          </Col>
        </GroupBody>
        <Label launcher>Fuente</Label>
      </Group>
      <Group $w={184}>
        <GroupBody $t={6} $l={7}>
          <Col $gap={6} $w={125}>
            <Row>
              <Slot $w={24}>
                <Bars rows={[[2, 15, 2], [4, 13, 6], [2, 15, 10]]} />
              </Slot>
              <Slot $w={24}>
                <Bars rows={[[2, 15, 4], [4, 13, 8], [2, 15, 12]]} />
              </Slot>
              <Slot $w={23} $sel>
                <Bars rows={[[2, 15, 6], [4, 13, 10], [2, 15, 14]]} />
              </Slot>
              <Slot $w={25}>
                <Orient />
              </Slot>
              <Slot $w={11}>
                <Chev />
              </Slot>
            </Row>
            <Row>
              <Slot $w={24}>
                <Bars rows={[[1, 16, 2], [1, 11, 6], [1, 16, 10], [1, 11, 14]]} />
              </Slot>
              <Slot $w={24}>
                <Bars rows={[[1, 16, 2], [4, 13, 6], [1, 16, 10], [4, 13, 14]]} />
              </Slot>
              <Slot $w={24}>
                <Bars rows={[[1, 16, 2], [6, 16, 6], [1, 16, 10], [6, 16, 14]]} />
              </Slot>
              <Slot $w={24}>
                <IndentL />
              </Slot>
              <Slot $w={24}>
                <IndentL flip />
              </Slot>
            </Row>
          </Col>
          <VSep $h={60} />
          <Col $gap={6}>
            <Row>
              <Slot $w={34}>
                <Wrap />
              </Slot>
            </Row>
            <Row>
              <Slot $w={34}>
                <Merge />
              </Slot>
              <Chev />
            </Row>
          </Col>
        </GroupBody>
        <Label launcher>Alineación</Label>
      </Group>
      <Group $w={101}>
        <GroupBody $l={7}>
          <Col>
            <Select $w={84} $l={2}>
              General
              <Chev />
            </Select>
            <Row $h={25}>
              <Slot $w={24}>
                <FontLetter $s={17}>$</FontLetter>
              </Slot>
              <Slot $w={8}>
                <Chev />
              </Slot>
              <Slot $w={38}>
                <FontLetter $s={19}>%</FontLetter>
              </Slot>
              <Slot $w={12}>
                <FontLetter $s={8.5} $c="#999">000</FontLetter>
              </Slot>
            </Row>
            <Row $h={25} $gap={11}>
              <Slot $w={18}>
                <Decimal />
              </Slot>
              <Slot $w={18}>
                <Decimal more />
              </Slot>
            </Row>
          </Col>
        </GroupBody>
        <Label launcher>Número</Label>
      </Group>
      <Group $w={54}>
        <GroupBody $t={2}>
          <BigBtn $w={53}>
            <IconBox $h={28}>
              <Calendar />
            </IconBox>
            <SmallText $mt={5}>Fecha</SmallText>
            <ChevLine>
              <Chev />
            </ChevLine>
          </BigBtn>
        </GroupBody>
        <Label>Date</Label>
      </Group>
      <Group $w={175}>
        <GroupBody $l={12}>
          <Col $mt={-2}>
            <ListItem>
              <CondFmt />
              Formato condicional
              <Chev />
            </ListItem>
            <ListItem>
              <TableFmt />
              Dar formato como tabla
              <Chev />
            </ListItem>
            <ListItem>
              <TableFmt cell />
              Estilos de celda
              <Chev />
            </ListItem>
          </Col>
        </GroupBody>
        <Label>Estilos</Label>
      </Group>
      <Group $w={101}>
        <GroupBody $l={11}>
          <Col $mt={-2}>
            <ListItem>
              <CellIns />
              Insertar
              <Spaced $l={11}>
                <Chev />
              </Spaced>
            </ListItem>
            <ListItem>
              <CellDel />
              Eliminar
              <Spaced $l={9}>
                <Chev />
              </Spaced>
            </ListItem>
            <ListItem>
              <CellFmt />
              Formato
              <Chev />
            </ListItem>
          </Col>
        </GroupBody>
        <Label>Celdas</Label>
      </Group>
      <Group $w={181}>
        <GroupBody $l={11}>
          <Col $w={35} $mt={-2}>
            <ListItem>
              <Slot $w={18}>
                <Sigma />
              </Slot>
              <Chev />
            </ListItem>
            <ListItem>
              <Slot $w={18}>
                <FillDown />
              </Slot>
              <Chev />
            </ListItem>
            <ListItem>
              <Slot $w={18}>
                <Eraser />
              </Slot>
              <Chev />
            </ListItem>
          </Col>
          <BigBtn $w={56}>
            <IconBox $h={35}>
              <SortFilter />
            </IconBox>
            <SmallText>Ordenar y</SmallText>
            <SmallText>
              filtrar
              <Chev />
            </SmallText>
          </BigBtn>
          <BigBtn $w={72}>
            <IconBox $h={35}>
              <Magnifier s={28} c="#555" w={0.6} />
            </IconBox>
            <SmallText>Buscar y</SmallText>
            <SmallText>
              seleccionar
              <Chev />
            </SmallText>
          </BigBtn>
        </GroupBody>
        <Label>Edición</Label>
      </Group>
      <Group $w={59}>
        <GroupBody>
          <BigBtn $w={58}>
            <IconBox $h={35}>
              <ChartLens />
            </IconBox>
            <SmallText>Analizar</SmallText>
            <SmallText>datos</SmallText>
          </BigBtn>
        </GroupBody>
        <Label>Análisis</Label>
      </Group>
      <CollapseBtn>
        <Chev c="#444" s={10} />
      </CollapseBtn>
    </RibbonRow>
    <QuickBar>
      <QuickItem $w={86}>
        <Spell />
        Ortografía
      </QuickItem>
      <QuickItem $w={168}>
        <ShareBook />
        Compartir libro (heredado)
      </QuickItem>
      <QuickItem $w={188} $off>
        <MergeBook />
        Comparar y combinar libros...
      </QuickItem>
      <QuickItem $w={222}>
        <ProtectBook />
        Proteger y compartir libro (heredado)
      </QuickItem>
      <QuickMore />
    </QuickBar>
  </RibbonCard>
);

const Grid = () => (
  <SheetArea>
    <Sheet>
      <Corner>
        <svg width="12" height="12" viewBox="0 0 12 12">
          <path d="M12 0v12H0z" fill="#cfcfcf" />
        </svg>
      </Corner>
      {columns.map((c) => (
        <ColHead key={c}>{c}</ColHead>
      ))}
      <ColHead $sel>M</ColHead>
      {rowsShown.map((r) => (
        <RowHead key={r} $row={r} $sel={r === 12}>
          {r === 1 ? "" : r}
        </RowHead>
      ))}

      <DataTable $col="3 / 8" $row="3 / 18">
        <Cell $span={5} $bg="#c5e0b3" $bold $align="center" $size={15.4}>VENTAS MENSUALES</Cell>
        <DiagCell $bold>
          <span>M</span>
          <span>P</span>
        </DiagCell>
        {heads.map((h) => (
          <Cell key={h} $bg="#5c9140" $bold $align="center">{h}</Cell>
        ))}
        {months.map((m, i) => (
          <React.Fragment key={m}>
            <Cell $bg="#568a3a" $bold $align="left">{m}</Cell>
            <Cell>{sales[i][0]}</Cell>
            <Cell>{sales[i][1]}</Cell>
            <Cell>{sales[i][2]}</Cell>
            <Cell $bold $align="center">{sales[i][3]}</Cell>
          </React.Fragment>
        ))}
        <Cell $start={4} $bg="#08a84f" $bold $align="center">TOTAL</Cell>
        <Cell $bg="#08a84f" $bold $align="center">80394</Cell>
      </DataTable>

      <DataTable $col="9 / 14" $row="3 / 17">
        <Cell $span={5} $bg="#c5e0b3" $bold $align="center" $size={15.4}>VENTAS MENSUALES %</Cell>
        <DiagCell $bold>
          <span>M</span>
          <span>P</span>
        </DiagCell>
        {heads.map((h) => (
          <Cell key={h} $bg="#8fcf4f" $bold $align="center">{h}</Cell>
        ))}
        {months.map((m, i) => (
          <React.Fragment key={m}>
            <Cell $bg="#8bcb4e" $bold $align="left">{m}</Cell>
            <Cell $flag>{pctPhone[i]}%</Cell>
            <Cell $flag>33.33%</Cell>
            <Cell $flag>{pctRadio[i]}%</Cell>
            <Cell $bold>100.00%</Cell>
          </React.Fragment>
        ))}
      </DataTable>

      <SelectedRow>
        <PointerWrap>
          <PointerCross />
        </PointerWrap>
      </SelectedRow>
      <FlashBtn>
        <FlashIc />
      </FlashBtn>
    </Sheet>
    <VScroll>
      <Tri dir="up" />
      <VThumb />
      <VDown>
        <Tri dir="down" />
      </VDown>
    </VScroll>
  </SheetArea>
);

export default function App() {
  return (
    <Page>
      <Global />
      <TitleBar>
        <LogoBox>
          <ExcelLogo />
        </LogoBox>
        <TitleText>Autoguardado</TitleText>
        <Toggle>
          <Knob />
        </Toggle>
        <Save />
        <TitleText>
          SUMAR FILAS Y COLUMNAS.xlsx &nbsp;▾
        </TitleText>
        <SearchBox>
          <Magnifier />
          Buscar (Alt+Q)
        </SearchBox>
        <TitleRight>
          <TitleText>sol produce peru</TitleText>
          <Spaced $l={9}>
            <Avatar />
          </Spaced>
          <Spaced $l={24}>
            <Pen />
          </Spaced>
          <Spaced $l={13}>
            <WinBtn>
              <svg width="10" height="2" viewBox="0 0 10 2">
                <path d="M0 1h10" stroke="#444" strokeWidth="1.2" />
              </svg>
            </WinBtn>
            <WinBtn>
              <svg width="11" height="11" viewBox="0 0 11 11" fill="none" stroke="#444">
                <rect x="1" y="2.500" width="7.500" height="8" rx="1" />
                <path d="M3 1h6a1.500 1.500 0 0 1 1.500 1.500V9" />
              </svg>
            </WinBtn>
            <WinBtn>
              <svg width="11" height="11" viewBox="0 0 11 11" fill="none" stroke="#444">
                <path d="M.5.5l10 10M10.500.5l-10 10" />
              </svg>
            </WinBtn>
          </Spaced>
        </TitleRight>
      </TitleBar>

      <TabRow>
        {tabs.map((t) => (
          <Tab key={t} $on={t === "Inicio"}>{t}</Tab>
        ))}
        <RightActions>
          <ActionBtn $w={105}>
            <Comment />
            Comentarios
          </ActionBtn>
          <ActionBtn $green $w={89}>
            <ShareIc />
            Compartir
          </ActionBtn>
        </RightActions>
      </TabRow>

      <Ribbon />
      <Grid />

      <SheetTabs>
        <TabNav>
          <NavArrow left />
          <NavArrow />
        </TabNav>
        <SheetTab>EDITABLE</SheetTab>
        <AddBox>
          <PlusCircle />
        </AddBox>
        <Dots>
          <svg width="2" height="12" viewBox="0 0 2 12" fill="#999">
            <path d="M0 0h2v2H0zM0 5h2v2H0zM0 10h2v2H0z" />
          </svg>
        </Dots>
        <HScroll>
          <Tri dir="left" />
          <HThumb />
          <Spaced $l={271}>
            <Tri dir="right" />
          </Spaced>
        </HScroll>
      </SheetTabs>

      <StatusBar>
        Listo
        <StatusIcon $l={43}>
          <MacroIc />
        </StatusIcon>
        <StatusIcon $l={13}>
          <AccessIc />
          Accesibilidad: es necesario investigar
        </StatusIcon>
        <ViewGroup>
          <ViewBtn $on>
            <GridView />
          </ViewBtn>
          <ViewBtn>
            <PageView />
          </ViewBtn>
          <ViewBtn>
            <BreakView />
          </ViewBtn>
          <ZoomSign $l={5}>−</ZoomSign>
          <ZoomTrack>
            <ZoomThumb />
          </ZoomTrack>
          <ZoomSign>+</ZoomSign>
          <ZoomPct>120%</ZoomPct>
        </ViewGroup>
      </StatusBar>

      <Taskbar>
        <Weather>
          <Weath />
          <WeatherText>
            22°C
            <br />
            Muy nublado
          </WeatherText>
        </Weather>
        <TaskIcons>
          <TaskSlot><Win /></TaskSlot>
          <TaskSlot><Magnifier s={22} c="#222" w={1.3} /></TaskSlot>
          <TaskSlot><TaskView /></TaskSlot>
          <TaskSlot><Meet /></TaskSlot>
          <TaskSlot $run><Chrome /></TaskSlot>
          <TaskSlot><Edge /></TaskSlot>
          <TaskSlot $run><Folder /></TaskSlot>
          <TaskSlot><Printer /></TaskSlot>
          <TaskSlot><SApp /></TaskSlot>
          <TaskSlot><Bt /></TaskSlot>
          <TaskSlot $run><Profile /></TaskSlot>
          <TaskSlot $on><ExcelLogo s={24} /></TaskSlot>
          <TaskSlot $run><CApp c="#6cb52d" /></TaskSlot>
          <TaskSlot $run><CApp c="#ee5a3e" /></TaskSlot>
        </TaskIcons>
        <Tray>
          <CaretUp />
          <TrayItem $l={14}><Mic /></TrayItem>
          <TrayItem $l={20}>
            <TrayText>ESP<br />LAA</TrayText>
          </TrayItem>
          <TrayItem $l={18}><Wifi /></TrayItem>
          <TrayItem $l={6}><Vol /></TrayItem>
          <TrayItem $l={8}><Batt /></TrayItem>
          <TrayItem $l={16}>
            <TrayText $right>15:56<br />9/04/2022</TrayText>
          </TrayItem>
          <TrayItem $l={13}><Moon /></TrayItem>
        </Tray>
      </Taskbar>
    </Page>
  );
}
